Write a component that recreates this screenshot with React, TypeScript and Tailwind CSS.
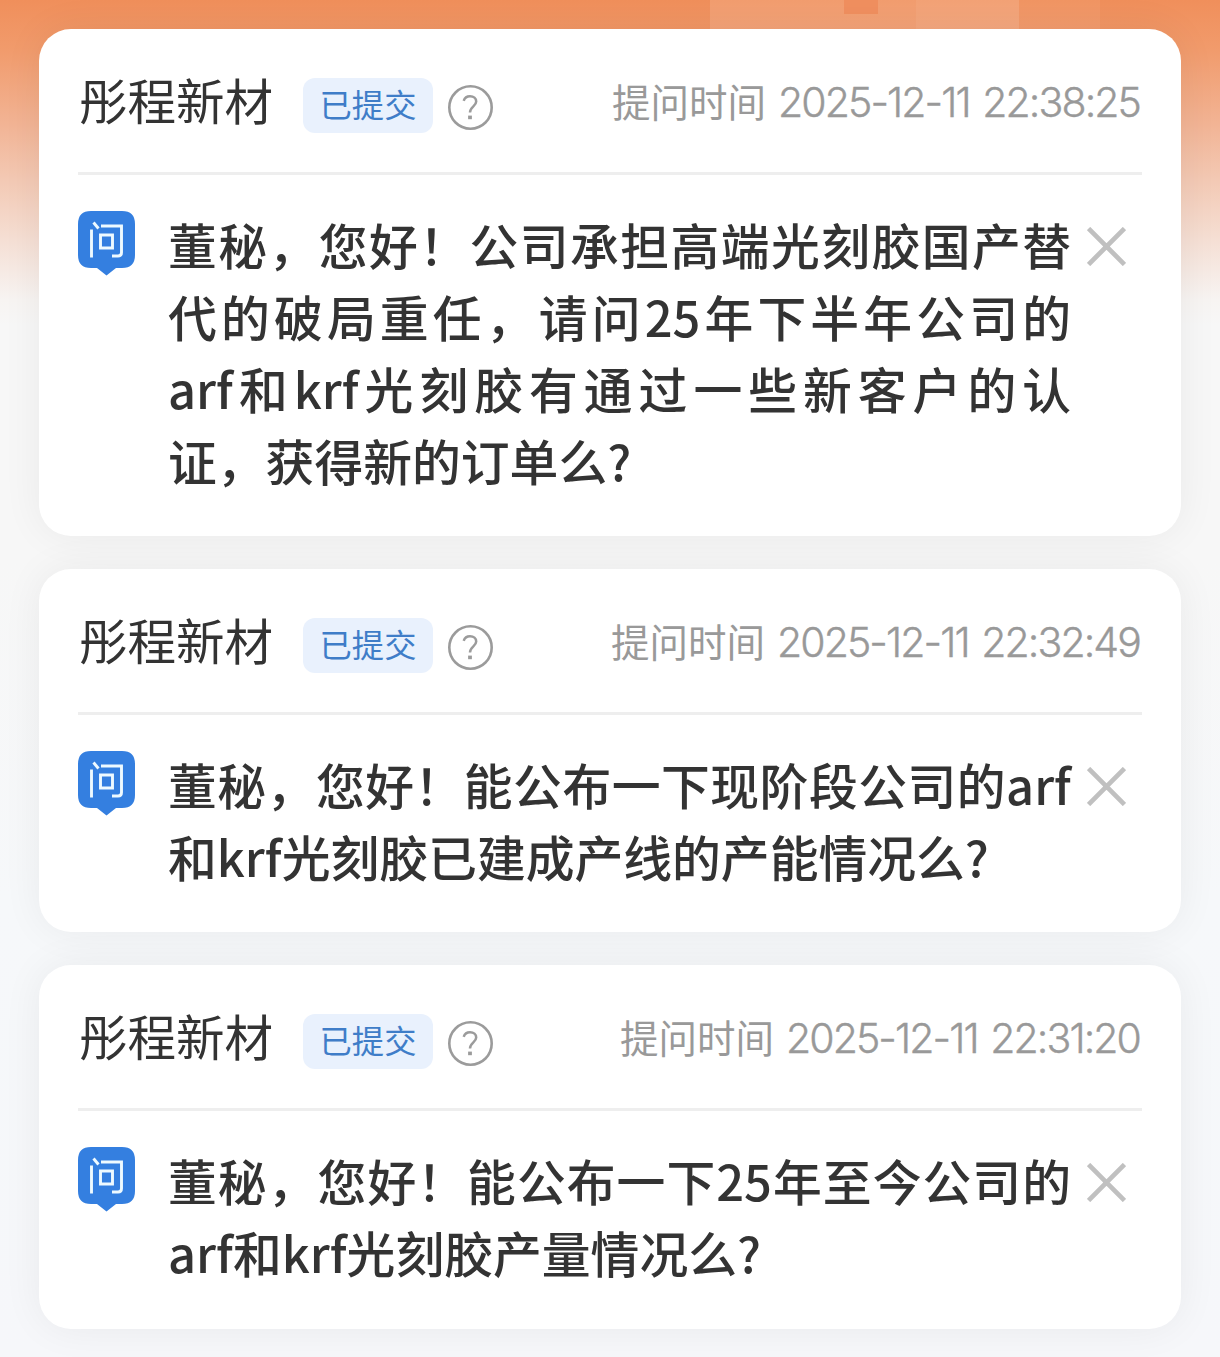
import React from 'react';

interface Question {
  id: number;
  company: string;
  status: string;
  time: string;
  lines: string[];
}

const questions: Question[] = [
  {
    id: 1,
    company: '彤程新材',
    status: '已提交',
    time: '2025-12-11 22:38:25',
    lines: [
      '董秘，您好！公司承担高端光刻胶国产替',
      '代的破局重任，请问25年下半年公司的',
      'arf和krf光刻胶有通过一些新客户的认',
      '证，获得新的订单么?',
    ],
  },
  {
    id: 2,
    company: '彤程新材',
    status: '已提交',
    time: '2025-12-11 22:32:49',
    lines: ['董秘，您好！能公布一下现阶段公司的arf', '和krf光刻胶已建成产线的产能情况么?'],
  },
  {
    id: 3,
    company: '彤程新材',
    status: '已提交',
    time: '2025-12-11 22:31:20',
    lines: ['董秘，您好！能公布一下25年至今公司的', 'arf和krf光刻胶产量情况么?'],
  },
];

const HelpIcon = () => (
  <svg className="mt-[7px] ml-[15px] h-[45px] w-[45px]" viewBox="0 0 45 45" fill="none" stroke="#9b9b9b">
    <circle cx="22.5" cy="22.5" r="21.2" strokeWidth="2.6" />
    <path d="M15.700 15.800C16.700 12.800 19 11.300 22 11.300c3.700 0 6.200 2.100 6.200 5.200 0 4.700-6.200 5.100-6.200 11" strokeWidth="2.500" />
    <path d="M22 30.600v3.600" strokeWidth="3.800" />
  </svg>
);

const AskIcon = () => (
  <svg className="h-[65px] w-[57px] shrink-0" viewBox="0 0 57 65" fill="none">
    <path d="M13 0H44Q57 0 57 13V44Q57 57 44 57H38L28.500 64.500 19 57H13Q0 57 0 44V13Q0 0 13 0Z" fill="#347fe0" />
    <g stroke="#eefaff" strokeWidth="2.900">
      <path d="M13.500 18.500V46.500" />
      <path d="M15.500 11.500L20.500 17.500" />
      <path d="M23 15H43.500V41.500Q43.500 45 40 45H34" />
      <path d="M22.500 24H34.500V37H22.500Z" />
    </g>
  </svg>
);

const CloseIcon = () => (
  <svg className="mt-[16px] ml-[16px] h-[39px] w-[39px] shrink-0" viewBox="0 0 38 38" stroke="#c0c0c0" strokeWidth="4.600">
    <path d="M1.500 1.500L36.500 36.500M36.500 1.500L1.500 36.500" />
  </svg>
);

const QuestionCard = ({ question }: { question: Question }) => {
  return (
    <article className="rounded-[32px] bg-white px-[39px] pb-[37px] shadow-[0_0_40px_rgba(0,0,0,0.06)] last:pb-[38px]">
      <header className="flex h-[146px] items-start border-b-[3px] border-[#eeeeee] pt-[49px]">
        <h2 className="-mt-[15px] ml-px text-[48.5px] leading-[72px] text-[#333]">{question.company}</h2>
        <span className="ml-[30px] flex h-[55px] w-[130px] items-center justify-center rounded-[12px] bg-[#e9f1fd] pb-[5px] text-[32.3px] text-[#3f7dc8]">
          {question.status}
        </span>
        <HelpIcon />
        <p className="-mt-[4px] mr-[2px] ml-auto flex items-baseline text-[38.5px] leading-[52px] whitespace-pre text-[#999]">
          提问时间
          <span className="ml-[12px] font-['Inter'] text-[41px] font-light tracking-[-1.9px] [word-spacing:3px] [-webkit-text-stroke:0.4px_#999]">
            {question.time}
          </span>
        </p>
      </header>

      <div className="flex items-start pt-[36px]">
        <AskIcon />
        <div className="-mt-[3px] ml-[33px] mb-[3px] w-[903px] text-[48.8px] leading-[72px] font-medium text-[#333]">
          {question.lines.map((line, i) => (
            <p
              key={line}
              className={
                i < question.lines.length - 1
                  ? 'whitespace-nowrap text-justify [text-align-last:justify]'
                  : 'whitespace-nowrap'
              }
            >
              {line}
            </p>
          ))}
        </div>
        <CloseIcon />
      </div>
    </article>
  );
};

const App = () => {
  return (
    <main className="relative h-[1357px] w-[1220px] overflow-hidden bg-[linear-gradient(180deg,#f08f5b_0px,#f19b6c_50px,#f2b495_125px,#f3c9b4_180px,#f5dfd4_240px,#f7f4f2_300px,#f7f7f7_325px,#f7f7f7_560px,#f6f8fa_900px,#f6f7fa_1357px)] font-['Noto_Sans_CJK_SC',sans-serif]">
      {/* Banner blocks peeking out above the first card */}
      <div className="absolute top-0 left-[710px] h-[60px] w-[390px] bg-white/5" />
      <div className="absolute top-0 left-[710px] h-[60px] w-[309px] bg-white/8" />
      <div className="absolute top-0 left-[916px] h-[60px] w-[103px] bg-white/5" />
      <div className="absolute top-0 left-[844px] h-[14px] w-[34px] bg-[#f08f5f]" />

      <div className="relative flex flex-col gap-[33px] px-[39px] pt-[29px]">
        {questions.map((question) => (
          <QuestionCard key={question.id} question={question} />
        ))}
      </div>
    </main>
  );
};

export default App;
